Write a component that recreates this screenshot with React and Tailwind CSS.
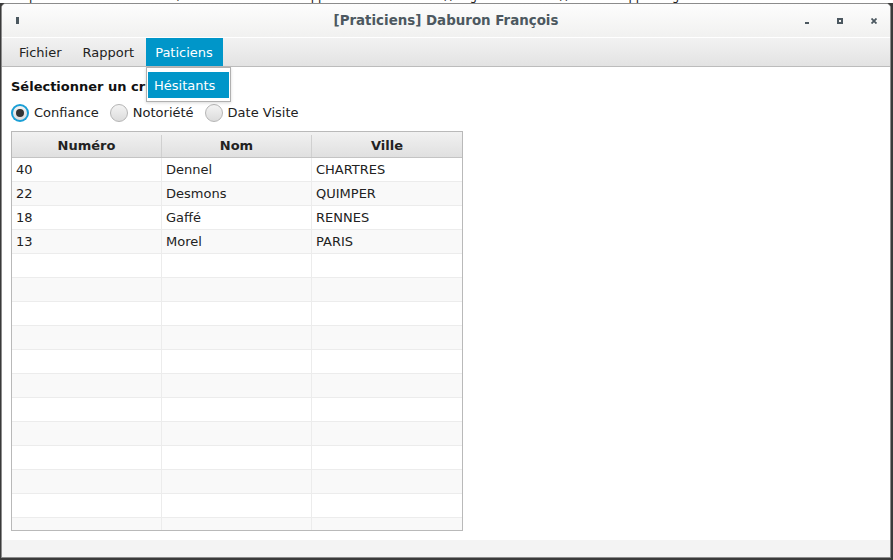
import React from 'react';

const rows = [
  { num: '40', nom: 'Dennel', ville: 'CHARTRES' },
  { num: '22', nom: 'Desmons', ville: 'QUIMPER' },
  { num: '18', nom: 'Gaffé', ville: 'RENNES' },
  { num: '13', nom: 'Morel', ville: 'PARIS' },
];

const Radio = ({ checked, label }) => (
  <label className="flex items-center gap-[5px] mr-[11px]">
    {checked ? (
      <span className="w-[18px] h-[18px] rounded-full bg-[#1a9fd6] flex items-center justify-center">
        <span className="w-[14px] h-[14px] rounded-full bg-gradient-to-b from-[#f4f4f4] to-[#dcdcdc] flex items-center justify-center">
          <span className="w-[8px] h-[8px] rounded-full bg-[#333]" />
        </span>
      </span>
    ) : (
      <span className="w-[18px] h-[18px] rounded-full border border-[#b5b5b5] bg-gradient-to-b from-[#f4f4f4] to-[#dcdcdc]" />
    )}
    <span className="text-[13px] text-[#222]">{label}</span>
  </label>
);

export default function App() {
  const data = [...rows];
  while (data.length < 16) data.push({ num: '', nom: '', ville: '' });

  return (
    <div className="w-[893px] h-[560px] bg-[#3a3a3a] overflow-hidden relative font-['DejaVu_Sans',sans-serif]">
      {/* bit of the editor behind the window */}
      <div className="h-[3px] bg-white overflow-hidden">
        <div className="-mt-[10px] whitespace-nowrap font-['DejaVu_Sans_Mono',monospace] text-[12px] leading-[13px] text-[#222]">
          {'ste praticien = '}<span className="text-[#2020c0]">new</span>{' Tele( '}
          <span className="text-[#c07000]">"Praticiens"</span>
          {'       leRapport.setPraticien(). getMedVisite()      '}
          <span className="text-[#c07000]">10</span>
          {'       leRapport.getMedVis'}
        </div>
      </div>

      <div className="ml-[1px] w-[890px] h-[555px] rounded-t-[5px] border border-[#8c8c8c] bg-white flex flex-col overflow-hidden">
        {/* title bar */}
        <div className="h-[34px] shrink-0 bg-gradient-to-b from-[#fdfdfd] to-[#f1f1f0] flex items-center relative border-b border-white">
          <span className="absolute left-[14px] top-[13px] w-[3px] h-[7px] bg-[#4c5860]" />
          <div className="flex-1 pt-[2px] text-center font-bold text-[13.4px] text-[#4c5860]">[Praticiens] Daburon François</div>
          <span className="absolute left-[803px] top-[18px] w-[4px] h-[2px] bg-[#4c5860]" />
          <span className="absolute left-[835px] top-[14px] w-[6px] h-[6px] border-2 border-[#4c5860]" />
          <svg className="absolute left-[869px] top-[14px]" width="6" height="6" viewBox="0 0 6 6">
            <path d="M0.5 0.5 L5.5 5.5 M5.5 0.5 L0.5 5.5" stroke="#4c5860" strokeWidth="1.8" />
          </svg>
        </div>

        {/* menu bar */}
        <div className="h-[29px] shrink-0 bg-gradient-to-b from-[#f2f2f2] to-[#e3e3e3] border-b border-[#bcbcbc] flex text-[13px] text-[#222] pl-[7px]">
          <div className="pl-[10px] pr-[11px] pt-[2px] flex items-center">Fichier</div>
          <div className="pl-[10px] pr-[12px] pt-[2px] flex items-center">Rapport</div>
          <div className="w-[77px] pl-[9px] pt-[2px] flex items-center bg-[#0096c9] text-white">Paticiens</div>
        </div>

        {/* content */}
        <div className="flex-1 pl-[9px] pt-[11px]">
          <div className="font-bold text-[13px] text-[#111] leading-[18px]">Sélectionner un critère</div>
          <div className="flex items-center mt-[7px]">
            <Radio checked label="Confiance" />
            <Radio label="Notoriété" />
            <Radio label="Date Visite" />
          </div>

          <div className="mt-[8px] w-[452px] h-[400px] border border-[#b9b9b9] overflow-hidden">
            <div className="flex h-[26px] pt-[3px] bg-gradient-to-b from-[#f1f1f1] to-[#e0e0e0] border-b border-[#c4c4c4] text-[13px] font-bold text-[#222]">
              <div className="w-[150px] border-r border-[#d0d0d0] flex items-center justify-center">Numéro</div>
              <div className="w-[150px] border-r border-[#d0d0d0] flex items-center justify-center">Nom</div>
              <div className="flex-1 flex items-center justify-center">Ville</div>
            </div>
            {data.map((r, i) => (
              <div key={i} className={`flex h-[24px] text-[13px] text-[#222] border-b border-[#ececec] ${i % 2 ? 'bg-[#f9f9f9]' : 'bg-white'}`}>
                <div className="w-[150px] border-r border-[#ececec] flex items-center pl-[4px] pt-[1px]">{r.num}</div>
                <div className="w-[150px] border-r border-[#ececec] flex items-center pl-[4px] pt-[1px]">{r.nom}</div>
                <div className="flex-1 flex items-center pl-[4px] pt-[1px]">{r.ville}</div>
              </div>
            ))}
          </div>
        </div>

        <div className="h-[17px] shrink-0 bg-[#f3f3f3]" />
      </div>

      {/* open menu popup */}
      <div className="absolute left-[146px] top-[67px] w-[85px] h-[35px] bg-white border border-[#b0b0b0] shadow-[0_1px_3px_rgba(0,0,0,0.15)] px-[1px] pt-[4px]">
        <div className="h-[26px] pt-[1px] bg-[#0096c9] text-white text-[13px] flex items-center pl-[6px]">Hésitants</div>
      </div>
    </div>
  );
}
